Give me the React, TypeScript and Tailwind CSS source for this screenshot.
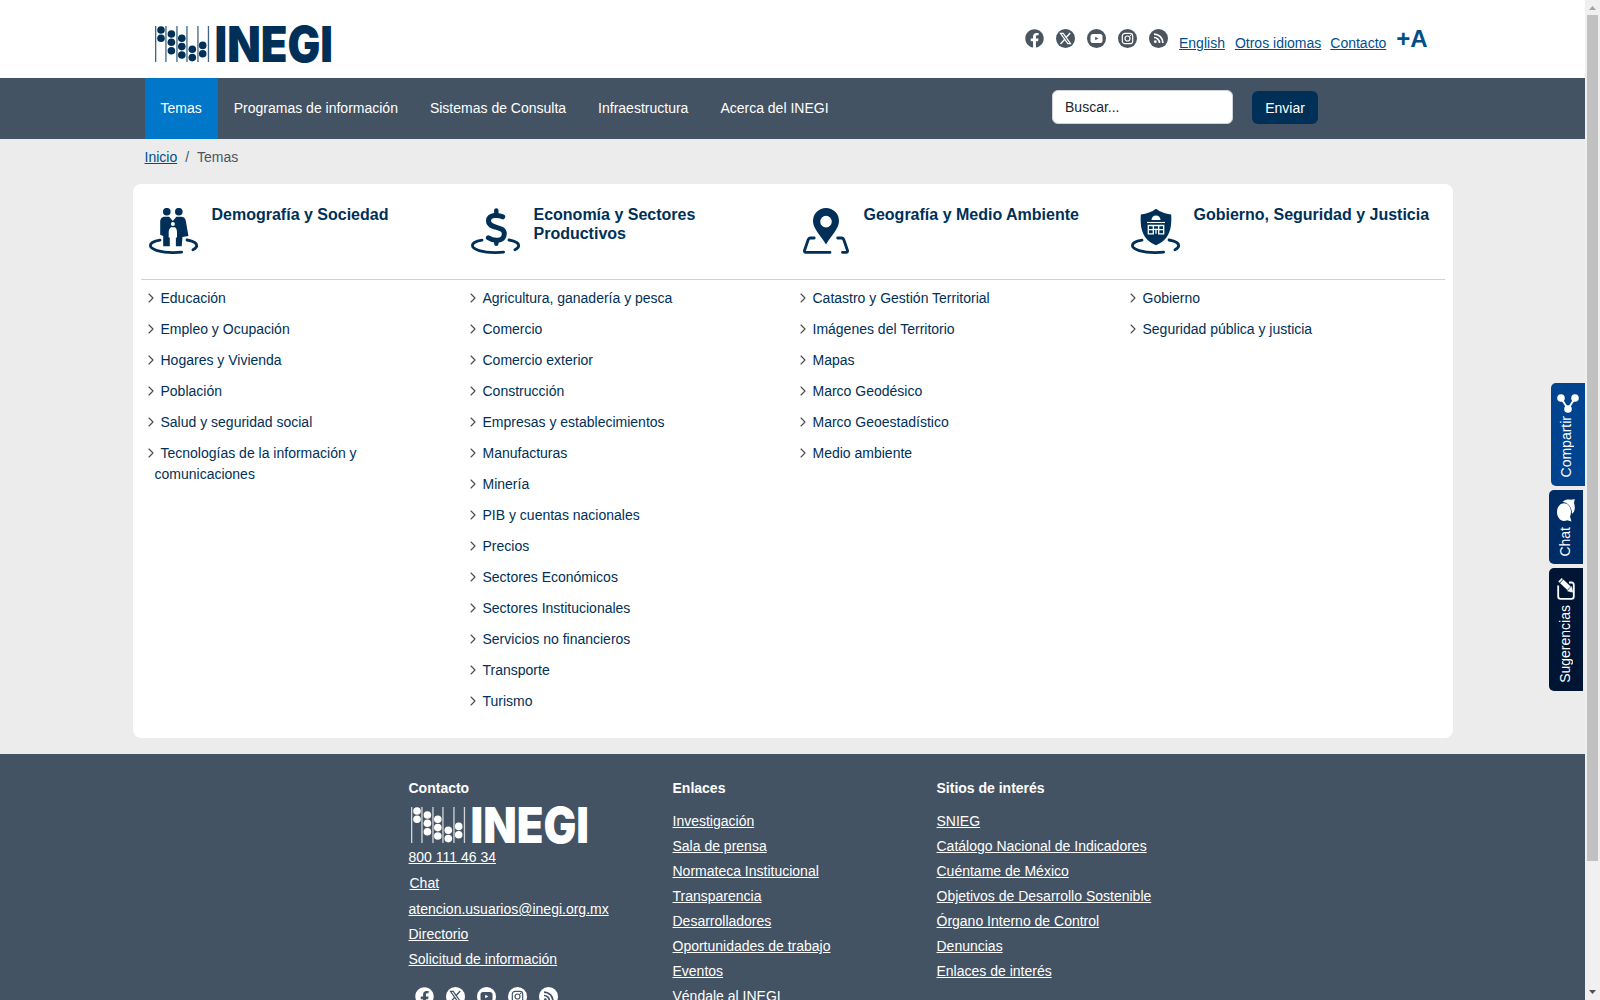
import React from 'react';
import { ChevronRight } from 'lucide-react';
import { FaFacebook } from 'react-icons/fa';

const NAV = ['Temas', 'Programas de información', 'Sistemas de Consulta', 'Infraestructura', 'Acerca del INEGI'];

type Topic = {
  title: string;
  icon: React.ReactNode;
  width: string;
  links: string[];
};

// Open ring drawn under most of the topic icons
const Ring = () => (
  <path
    d="M11 32.2C5 33 1.4 35.3 1.4 37.6c0 4 10.5 7 22.6 7 3 0 6.4-.1 8.6-.4M38 32c5.5 1 9.700 3 9.700 5.500 0 1.500-1.500 3.200-3.800 4.200"
    fill="none"
    stroke="currentColor"
    strokeWidth="2.8"
    strokeLinecap="round"
  />
);

const PeopleIcon = () => (
  <svg viewBox="0 0 50 48" className="w-[50px] h-[48px]" fill="currentColor">
    <Ring />
    <circle cx="17.8" cy="3.7" r="3.8" />
    <circle cx="29.8" cy="3.7" r="3.8" />
    <path d="M15.7 8.800h4.500l3.600 4.200 3.600-4.200h4.600c2.800 0 4.200 1.600 4.800 4L39.400 28l-5.900 1-.8 9.200h-5.900V24h-6V38.200h-6.600V28l-3-1.200V14c0-3 1.600-5.200 4.500-5.200z" />
    <path d="M22 19.200h4c1.400 1.100 2 2.800 2 5v5.300h-1.600v8.700h-5.200v-8.700h-1.500v-5.300c0-2.200.8-3.900 2.300-5z" fill="#fff" />
    <circle cx="23.900" cy="16" r="2" fill="#fff" />
  </svg>
);

const MoneyIcon = () => (
  <svg viewBox="0 0 50 48" className="w-[50px] h-[48px]" fill="none" stroke="currentColor" strokeLinecap="round">
    <Ring />
    <path d="M25.3 2.400v4M25.3 33v2.800" strokeWidth="4.4" />
    <path d="M31.700 8.800c-4-2-14-2.600-14.200 4C17.600 21.600 33.600 17 33.300 26 33 34.200 22 33 17.400 29.800" strokeWidth="5" />
  </svg>
);

const MapIcon = () => (
  <svg viewBox="0 0 50 48" className="w-[50px] h-[48px]" fill="currentColor">
    <path fillRule="evenodd" d="M25 0a13 13 0 0 1 13 13c0 8-8 14.500-13 23.500C20 27.500 12 21 12 13A13 13 0 0 1 25 0zm0 7.800a5.800 5.800 0 1 0 0 11.600 5.800 5.800 0 0 0 0-11.600z" />
    <path d="M13.200 30H9.500c-1.500 0-1.900.6-2.400 2L3.500 42.500c-.4 1.300.3 1.900 1.400 1.900H29M36.700 30h3.800c1.500 0 1.900.6 2.400 2l3.600 10.500c.4 1.300-.3 1.900-1.400 1.900h-3.600" fill="none" stroke="currentColor" strokeWidth="2.8" strokeLinecap="round" />
  </svg>
);

const GovernmentIcon = () => (
  <svg viewBox="0 0 50 48" className="w-[50px] h-[48px]" fill="currentColor">
    <Ring />
    <path d="M25 .8c4.400 3.400 9 5 15.200 5.600C40.900 19 39.400 31 25 37.200 10.600 31 9.100 19 9.800 6.400 16 5.800 20.600 4.200 25 .8z" />
    <path d="M20.500 12a4.500 4.500 0 0 1 9 0z" fill="#fff" />
    <path d="M16 14.500h18" stroke="#fff" strokeWidth="1.100" />
    <g fill="none" stroke="#fff" strokeWidth="1.300">
      <path d="M17.300 17.500h5v8.300h-5zM27.700 17.500h5v8.300h-5zM17.300 21.600h5M27.700 21.600h5M22.300 17.500h5.400M22.300 21.300h5.400M25 21.300v4.500" />
    </g>
  </svg>
);

const TOPICS: Topic[] = [
  {
    title: 'Demografía y Sociedad',
    icon: <PeopleIcon />,
    width: 'w-[322px]',
    links: ['Educación', 'Empleo y Ocupación', 'Hogares y Vivienda', 'Población', 'Salud y seguridad social', 'Tecnologías de la información y comunicaciones'],
  },
  {
    title: 'Economía y Sectores Productivos',
    icon: <MoneyIcon />,
    width: 'w-[330px]',
    links: [
      'Agricultura, ganadería y pesca', 'Comercio', 'Comercio exterior', 'Construcción', 'Empresas y establecimientos',
      'Manufacturas', 'Minería', 'PIB y cuentas nacionales', 'Precios', 'Sectores Económicos', 'Sectores Institucionales',
      'Servicios no financieros', 'Transporte', 'Turismo',
    ],
  },
  {
    title: 'Geografía y Medio Ambiente',
    icon: <MapIcon />,
    width: 'w-[330px]',
    links: ['Catastro y Gestión Territorial', 'Imágenes del Territorio', 'Mapas', 'Marco Geodésico', 'Marco Geoestadístico', 'Medio ambiente'],
  },
  {
    title: 'Gobierno, Seguridad y Justicia',
    icon: <GovernmentIcon />,
    width: 'w-[322px]',
    links: ['Gobierno', 'Seguridad pública y justicia'],
  },
];

const ENLACES = ['Investigación', 'Sala de prensa', 'Normateca Institucional', 'Transparencia', 'Desarrolladores', 'Oportunidades de trabajo', 'Eventos', 'Véndale al INEGI'];
const SITIOS = ['SNIEG', 'Catálogo Nacional de Indicadores', 'Cuéntame de México', 'Objetivos de Desarrollo Sostenible', 'Órgano Interno de Control', 'Denuncias', 'Enlaces de interés'];

// Abacus beads: [x, y]
const BEADS = [
  [6, 4], [6, 12.3],
  [16.4, 8], [16.4, 16.3], [16.4, 24.7],
  [26.8, 12.3], [26.8, 20.6], [26.8, 29],
  [37.3, 23.2], [37.3, 31.6],
  [47.7, 19.4], [47.7, 27.8],
];

function Logo({ className }: { className: string }) {
  return (
    <svg viewBox="0 0 177 36" className={`overflow-visible ${className}`} fill="currentColor">
      {[0, 10.3, 21.3, 31.3, 42.3, 52.8].map((x) => (
        <rect key={x} x={x} y="0" width="1.3" height="36" opacity="0.75" />
      ))}
      {BEADS.map(([x, y]) => (
        <circle key={`${x}-${y}`} cx={x} cy={y} r="3.8" />
      ))}
      <text x="59.5" y="35.5" fontFamily="Inter, sans-serif" fontWeight="900" fontSize="49" textLength="118.5" lengthAdjust="spacingAndGlyphs">INEGI</text>
    </svg>
  );
}

function SocialIcons({ glyph }: { glyph: string }) {
  return (
    <div className="flex gap-3">
      <FaFacebook size={19} />
      <svg viewBox="0 0 19 19" className="w-[19px] h-[19px]">
        <circle cx="9.5" cy="9.5" r="9.5" fill="currentColor" />
        <g fill="none" stroke={glyph}>
          <path d="M4.5 4.300h2.700l7.300 10.400h-2.700z" strokeWidth="1.2" />
          <path d="M14.200 4l-4.300 4.800M8.800 10.200l-4.300 4.800" strokeWidth="1.3" />
        </g>
      </svg>
      <svg viewBox="0 0 19 19" className="w-[19px] h-[19px]">
        <circle cx="9.5" cy="9.5" r="9.5" fill="currentColor" />
        <rect x="3.5" y="5" width="12" height="9" rx="2.6" fill={glyph} />
        <path d="M8.200 7.700v3.600l3.200-1.800z" fill="currentColor" />
      </svg>
      <svg viewBox="0 0 19 19" className="w-[19px] h-[19px]">
        <circle cx="9.5" cy="9.5" r="9.5" fill="currentColor" />
        <rect x="4.3" y="4.3" width="10.4" height="10.4" rx="2.8" fill="none" stroke={glyph} strokeWidth="1.2" />
        <circle cx="9.5" cy="9.5" r="2.5" fill="none" stroke={glyph} strokeWidth="1.2" />
        <circle cx="12.5" cy="6.5" r="0.7" fill={glyph} />
      </svg>
      <svg viewBox="0 0 19 19" className="w-[19px] h-[19px]">
        <circle cx="9.5" cy="9.5" r="9.5" fill="currentColor" />
        <circle cx="6.3" cy="12.7" r="1.4" fill={glyph} />
        <path d="M5 8.500a5.500 5.500 0 0 1 5.500 5.500M5 5.100a8.900 8.900 0 0 1 8.900 8.900" fill="none" stroke={glyph} strokeWidth="1.7" />
      </svg>
    </div>
  );
}

function SideTabs() {
  return (
    <div className="absolute right-[15px] top-[383px] flex flex-col items-end gap-1 text-white text-[14px] leading-none">
      <div className="w-[34px] h-[103px] bg-[#00448f] rounded-l-[5px] flex flex-col items-center pt-[11px]">
        <svg viewBox="0 0 22 19" className="w-[22px] h-[19px] shrink-0" fill="currentColor">
          <path d="M4 4l7 11 7-11" fill="none" stroke="currentColor" strokeWidth="2" />
          <circle cx="4" cy="4" r="3.8" />
          <circle cx="18" cy="4" r="3.8" />
          <circle cx="11" cy="15" r="3.8" />
        </svg>
        <span className="[writing-mode:vertical-rl] rotate-180 mt-[3px] mr-[5px]">Compartir</span>
      </div>
      <div className="w-[34px] h-[74px] mr-[2px] bg-[#002c66] rounded-l-[5px] flex flex-col items-center pt-[9px]">
        <svg viewBox="0 0 18 23" className="w-[18px] h-[23px] shrink-0" fill="currentColor">
          <path d="M5.500 2.700C8 .6 11 .3 13.500.7L17.800.300l-.8 3.800c1.500 4.500.9 8.500-2 11C15.200 9 11.500 3.700 5.500 2.700z" />
          <path d="M7 4.300c4.200 0 7 4 7 8.800 0 1.700-.3 3.200-1 4.500l1.500 4.900-4.200-1.300c-1 .5-2.200.8-3.300.8-4 0-7-4-7-8.900s3-8.800 7-8.800z" />
        </svg>
        <span className="[writing-mode:vertical-rl] rotate-180 mt-[5px] mr-[2px]">Chat</span>
      </div>
      <div className="w-[34px] h-[123px] mr-[2px] bg-[#001534] rounded-l-[5px] flex flex-col items-center pt-[9px]">
        <svg viewBox="0 0 18 23" className="w-[18px] h-[23px] shrink-0" fill="none" stroke="currentColor">
          <path d="M1.200 8.500v11c0 1.500.7 2.300 2.300 2.300h11c1.600 0 2.300-.8 2.300-2.300v-11.500c0-1.600-.7-2.500-2.300-2.500H12" strokeWidth="1.800" />
          <path d="M3 2.800l9 8.500" strokeWidth="5" />
          <path d="M10.500 14l4-4.500 1.300 5.700z" fill="currentColor" strokeWidth="0.5" />
          <path d="M2.800 6l4.200-4.500" stroke="#001534" strokeWidth="0.9" />
        </svg>
        <span className="[writing-mode:vertical-rl] rotate-180 mt-[5px] mr-[2px]">Sugerencias</span>
      </div>
    </div>
  );
}

function Scrollbar() {
  return (
    <div className="w-[15px] h-full bg-[#f0f0f0] flex flex-col items-center shrink-0">
      <svg viewBox="0 0 15 15" className="w-[15px] h-[15px]"><path d="M4 10h7L7.500 6z" fill="#a3a3a3" /></svg>
      <div className="w-[11px] h-[846px] bg-[#c1c1c1]" />
      <div className="flex-1" />
      <svg viewBox="0 0 15 15" className="w-[15px] h-[15px]"><path d="M4 5h7L7.500 9z" fill="#505050" /></svg>
    </div>
  );
}

export default function App() {
  return (
    <div className="relative w-[1600px] h-[1000px] overflow-hidden flex bg-[#ececec] font-['Liberation_Sans',Arial,sans-serif] text-sm leading-[21px]">
      <div className="w-[1585px] h-full overflow-hidden">
        {/* Header */}
        <header className="h-[78px] bg-white flex pl-[155px]">
          <Logo className="w-[177px] h-[36px] mt-[26px] text-[#003057]" />
          <div className="flex ml-[693px] pt-[29px] text-[#4b555f]">
            <SocialIcons glyph="#fff" />
          </div>
          <div className="flex items-start gap-[10px] ml-[11px] pt-[33px] text-[#004f8b]">
            <a className="underline" href="#">English</a>
            <a className="underline" href="#">Otros idiomas</a>
            <a className="underline -ml-[1px]" href="#">Contacto</a>
            <a className="font-bold text-2xl leading-none -mt-[6px]" href="#">+A</a>
          </div>
        </header>

        {/* Navigation */}
        <nav className="h-[61px] bg-[#445363] text-white flex pl-[144.5px]">
          {NAV.map((item, i) => (
            <a key={item} href="#" className={`h-full px-4 pt-5 ${i === 0 ? 'bg-[#0077c8]' : ''}`}>{item}</a>
          ))}
          <div className="flex ml-[207.5px] pt-3">
            <div className="w-[181px] h-[34px] bg-white border border-[#ced4da] rounded-md text-[#212529] pl-3 pt-[6px]">Buscar...</div>
            <button className="w-[66px] h-[33px] mt-[1px] ml-[19px] pt-[2px] rounded-md bg-[#003057] text-white">Enviar</button>
          </div>
        </nav>

        {/* Breadcrumb */}
        <div className="h-[45px] pl-[144.5px] pt-[8px] flex gap-2 text-[#4b555f]">
          <a href="#" className="underline text-[#004f8b]">Inicio</a>
          <span>/</span>
          <span>Temas</span>
        </div>

        {/* Topics */}
        <main className="w-[1320px] h-[554px] ml-[132.5px] bg-white rounded-lg px-2 text-[#003057]">
          <div className="flex h-[96px] border-b border-[#c8d3dc]">
            {TOPICS.map((topic, i) => (
              <div key={topic.title} className={`flex pt-6 pl-2 ${topic.width}`}>
                <div className="shrink-0 w-[63px]">{topic.icon}</div>
                <h2 className={`text-base font-bold leading-[19.2px] -mt-[3px] ${i === 1 ? 'w-[200px]' : 'whitespace-nowrap'}`}>{topic.title}</h2>
              </div>
            ))}
          </div>
          <div className="flex pt-[3px]">
            {TOPICS.map((topic) => (
              <ul key={topic.title} className={`pl-[14px] ${topic.width}`}>
                {topic.links.map((link) => (
                  <li key={link} className="py-[5px] w-[240px]">
                    <ChevronRight size={16} strokeWidth={1.6} className="inline -ml-[12px] mr-[2px] -mt-[2px] text-[#4a4a4a]" />
                    <a href="#">{link}</a>
                  </li>
                ))}
              </ul>
            ))}
          </div>
        </main>

        {/* Footer */}
        <footer className="mt-4 h-[246px] overflow-hidden bg-[#445363] text-white pl-[408.5px] pt-6 flex">
          <div className="w-[264px]">
            <h3 className="font-bold">Contacto</h3>
            <Logo className="w-[179px] h-[36px] mt-2 ml-[1px]" />
            <div className="flex flex-col items-start">
              <a href="#" className="underline mt-[4px]">800 111 46 34</a>
              <a href="#" className="underline mt-[5px] ml-[1px]">Chat</a>
              <a href="#" className="underline mt-[5px]">atencion.usuarios@inegi.org.mx</a>
              <a href="#" className="underline mt-1">Directorio</a>
              <a href="#" className="underline mt-1">Solicitud de información</a>
            </div>
            <div className="mt-[17px] ml-[6.5px]">
              <SocialIcons glyph="#445363" />
            </div>
          </div>
          <div className="w-[264px]">
            <h3 className="font-bold mb-3">Enlaces</h3>
            {ENLACES.map((link) => (
              <div key={link} className="h-[25px]"><a href="#" className="underline">{link}</a></div>
            ))}
          </div>
          <div className="w-[264px]">
            <h3 className="font-bold mb-3">Sitios de interés</h3>
            {SITIOS.map((link) => (
              <div key={link} className="h-[25px]"><a href="#" className="underline">{link}</a></div>
            ))}
          </div>
        </footer>
      </div>
      <Scrollbar />
      <SideTabs />
    </div>
  );
}
